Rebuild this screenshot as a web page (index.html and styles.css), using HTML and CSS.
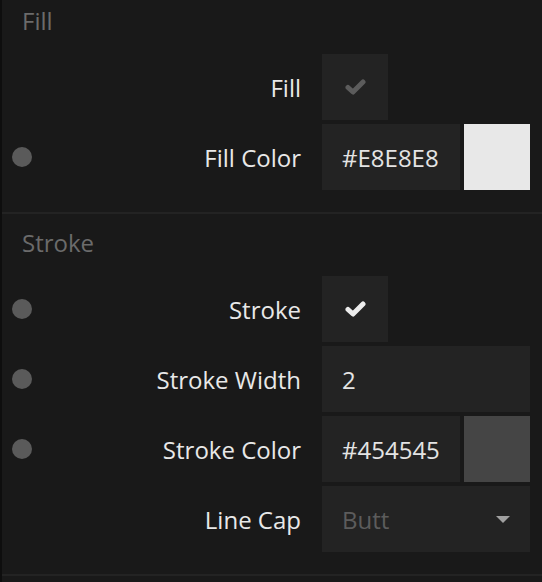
FILE: index.html
```html
<!DOCTYPE html>
<html>
<head>
<meta charset="utf-8">
<link rel="stylesheet" href="styles.css">
</head>
<body>
<div class="panel">
  <section class="section first">
    <div class="section-title">Fill</div>
    <div class="row">
      <span class="slot"></span>
      <label class="label">Fill</label>
      <div class="control">
        <div class="check off">
          <svg width="21" height="16" viewBox="0 0 21 16"><polyline points="3,8.5 8,13 18,3" fill="none" stroke="currentColor" stroke-width="5" stroke-linecap="round" stroke-linejoin="round"/></svg>
        </div>
      </div>
    </div>
    <div class="row">
      <span class="slot"><span class="dot"></span></span>
      <label class="label">Fill Color</label>
      <div class="control color">
        <div class="field">#E8E8E8</div>
        <div class="swatch light"></div>
      </div>
    </div>
  </section>
  <section class="section last">
    <div class="section-title">Stroke</div>
    <div class="row">
      <span class="slot"><span class="dot"></span></span>
      <label class="label">Stroke</label>
      <div class="control">
        <div class="check on">
          <svg width="21" height="16" viewBox="0 0 21 16"><polyline points="3,8.5 8,13 18,3" fill="none" stroke="currentColor" stroke-width="5" stroke-linecap="round" stroke-linejoin="round"/></svg>
        </div>
      </div>
    </div>
    <div class="row">
      <span class="slot"><span class="dot"></span></span>
      <label class="label">Stroke Width</label>
      <div class="control">
        <div class="field">2</div>
      </div>
    </div>
    <div class="row">
      <span class="slot"><span class="dot"></span></span>
      <label class="label">Stroke Color</label>
      <div class="control color">
        <div class="field">#454545</div>
        <div class="swatch dark"></div>
      </div>
    </div>
    <div class="row">
      <span class="slot"></span>
      <label class="label">Line Cap</label>
      <div class="control">
        <div class="field select"><span class="placeholder">Butt</span><span class="caret"></span></div>
      </div>
    </div>
  </section>
</div>
</body>
</html>
```
FILE: styles.css
```css
* { box-sizing: border-box; }
html, body { margin: 0; padding: 0; background: #191919; }
body {
  font-family: "Open Sans", "Noto Sans", sans-serif;
  font-size: 24px;
  color: #e6e6e6;
}
.panel {
  border-left: 2px solid #0e0e0e;
  min-height: 582px;
  background: #191919;
}
.section {
  border-top: 2px solid #232323;
  padding-bottom: 22px;
  display: flex;
  flex-direction: column;
  gap: 4px;
}
.section.first { border-top: none; }
.section.last { border-bottom: 2px solid #232323; }
.section-title {
  height: 58px;
  padding: 13px 0 0 20px;
  color: #6b6b6b;
  line-height: 31px;
}
.section.first .section-title { height: 50px; padding-top: 5px; }
.row {
  display: grid;
  grid-template-columns: 20px 1fr 208px;
  column-gap: 21px;
  align-items: center;
  height: 66px;
  padding: 0 12px 0 10px;
}
.slot { display: flex; align-items: center; }
.dot {
  width: 20px; height: 20px;
  border-radius: 50%;
  background: #5a5a5a;
}
.label {
  text-align: right;
  white-space: nowrap;
  color: #e8e8e8;
}
.control { display: flex; gap: 4px; height: 66px; }
.check {
  width: 66px; height: 66px;
  background: #232323;
  display: flex; align-items: center; justify-content: center;
}
.check.off { color: #5c5c5c; }
.check.on { color: #ececec; }
.field {
  flex: 1;
  background: #232323;
  padding-left: 20px;
  display: flex; align-items: center;
  color: #e4e4e4;
}
.color .field { flex: 0 0 138px; }
.swatch { width: 66px; height: 66px; }
.swatch.light { background: #e8e8e8; }
.swatch.dark { background: #454545; }
.select { justify-content: space-between; padding-right: 20px; }
.placeholder { color: #5c5c5c; }
.caret {
  width: 0; height: 0;
  border-left: 7px solid transparent;
  border-right: 7px solid transparent;
  border-top: 7px solid #a0a0a0;
}
```
